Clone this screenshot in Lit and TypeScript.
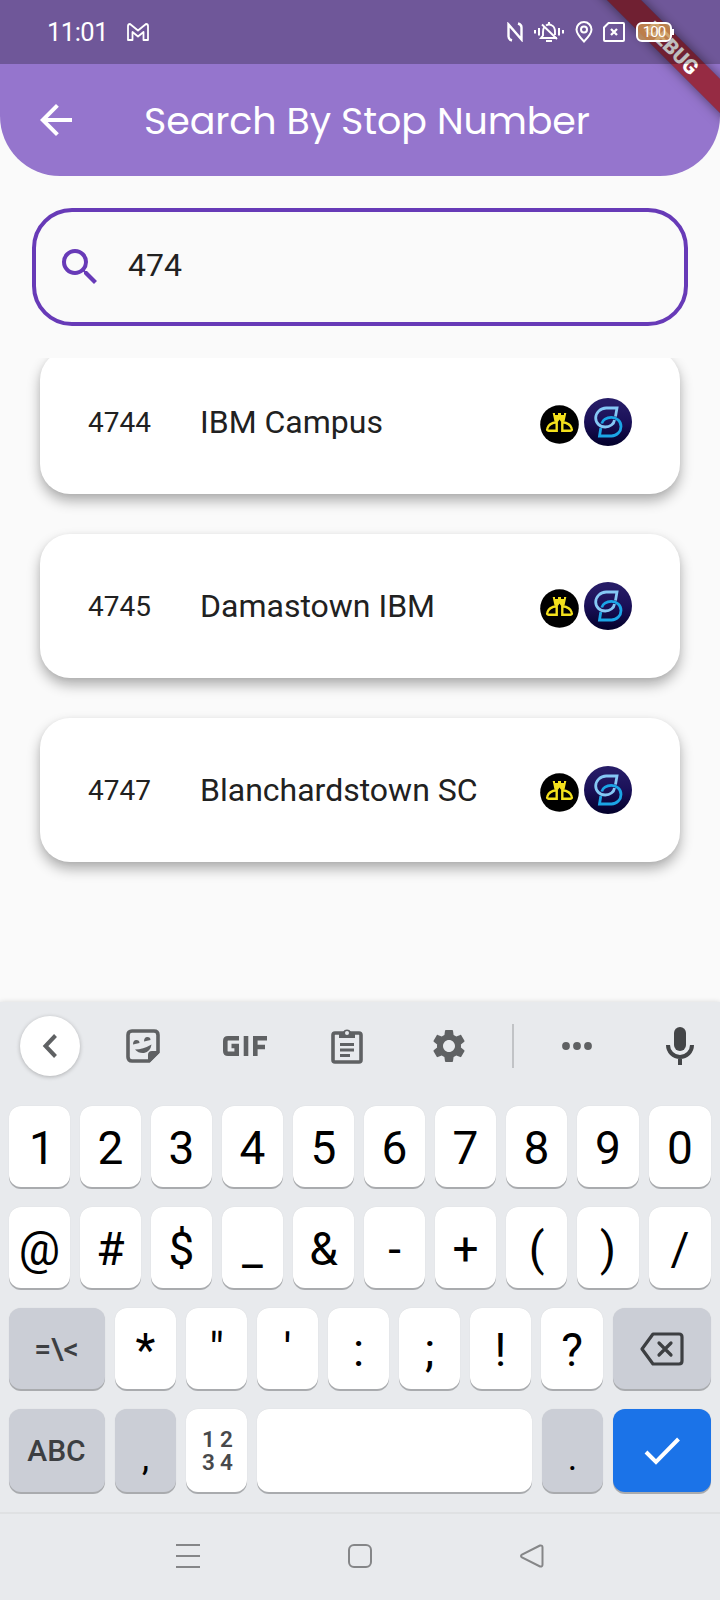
import { LitElement, html, css } from "lit";
import { customElement, property } from "lit/decorators.js";

interface Stop { id: string; name: string }

const STOPS: Stop[] = [
  { id: "4744", name: "IBM Campus" },
  { id: "4745", name: "Damastown IBM" },
  { id: "4747", name: "Blanchardstown SC" },
];

@customElement("status-bar")
class StatusBar extends LitElement {
  static styles = css`
    :host { display: flex; height: 64px; box-sizing: border-box; background: rgba(0, 0, 0, 0.25);
      align-items: center; padding: 0 48px 0 47px; color: #fff; font-family: Roboto, sans-serif; }
    .time { font-size: 25.500px; line-height: 30px; letter-spacing: -0.500px; width: 79px; white-space: nowrap; }
    svg { display: block; flex: none; fill: none; stroke: #fff; stroke-width: 2; }
    .spacer { flex: 1; }
    .nfc { margin-right: 10px; }
    .bell { margin-right: 10px; }
    .pin { margin-right: 10px; }
    .sim { margin-right: 11px; }
    .battery { position: relative; box-sizing: border-box; width: 36px; height: 20px; border: 2px solid #fff; border-radius: 6px;
      background: rgba(214, 158, 84, 0.75); font-size: 15px; line-height: 16px; text-align: center; letter-spacing: -1px; }
    .battery::after { content: ""; position: absolute; right: -4px; top: 5px; width: 2px; height: 6px; background: #fff; }
  `;
  render() {
    return html`
      <span class="time">11:01</span>
      <svg width="24" height="20" viewBox="0 0 24 20" stroke-linejoin="round"><path d="M2 18V4q0-2 2-2l8 6.500 8-6.500q2 0 2 2v14h-4.500v-8L12 14.500 6.500 10v8z" stroke-width="1.800"/></svg>
      <span class="spacer"></span>
      <svg class="nfc" width="16" height="20" viewBox="0 0 16 20"><path d="M5 18.500q-3.500-1-3.500-4V2.500l13 15V5.500q0-3-3.500-4" stroke-width="2.400"/></svg>
      <svg class="bell" width="32" height="22" viewBox="0 0 32 22"><path d="M2 9v3.500M6 7v7.500M30 9v3.500M26 7v7.500M16 1v2M13 20h6"/><path d="M11 6.500q-1 1.500-1 4.500v3.500L8 17h16M13 4.500q3-2 6 0 3 1.500 3 6.500v3M9 3.500 24 18" stroke-width="1.900"/></svg>
      <svg class="pin" width="18" height="22" viewBox="0 0 18 22"><path d="M9 20.500Q1.500 13 1.500 8.500a7.500 7.500 0 0 1 15 0Q16.500 13 9 20.500z"/><circle cx="9" cy="8.500" r="3"/></svg>
      <svg class="sim" width="22" height="20" viewBox="0 0 22 20"><path d="M5.500 1H20q1 0 1 1v16q0 1-1 1H2q-1 0-1-1V5.500z"/><path d="m8 7 6 6m0-6-6 6" stroke-width="2.300"/></svg>
      <span class="battery">100</span>
    `;
  }
}

@customElement("stop-card")
class StopCard extends LitElement {
  @property({ attribute: false }) stop!: Stop;
  static styles = css`
    :host { display: flex; flex: none; height: 144px; box-sizing: border-box; align-items: center; padding: 0 48px;
      background: #fff; border-radius: 30px; color: #212121; font-family: Roboto, sans-serif;
      box-shadow: 0 7px 13px rgba(0, 0, 0, 0.3), 0 1px 5px rgba(0, 0, 0, 0.05); }
    .id { width: 112px; font-size: 28px; line-height: 33px; }
    .name { flex: 1; font-size: 32px; line-height: 38px; white-space: nowrap; }
    svg { display: block; flex: none; }
    .bus { margin: 5px 5px 0 0; }
  `;
  render() {
    return html`
      <span class="id">${this.stop.id}</span>
      <span class="name">${this.stop.name}</span>
      <svg class="bus" width="39" height="39" viewBox="0 0 39 39">
        <circle cx="19.500" cy="19.500" r="19.300" fill="#000"/>
        <g fill="none" stroke="#f4e11c" stroke-width="2.400">
          <path d="M16.700 15.500v10.200H8.600q-2 0-1.300-2.200 1.500-5.500 9.400-6.300"/>
          <path d="M22.300 15.500v10.200h8.100q2 0 1.300-2.200-1.500-5.500-9.400-6.300"/>
        </g>
        <path d="M12.700 8h2.300v2h3V8h3v2h3V8h2.300L24.500 16.500h-3.700l-1.300-2-1.300 2h-3.700z" fill="#f4e11c"/>
      </svg>
      <svg width="48" height="48" viewBox="0 0 48 48">
        <defs><linearGradient id="g" x2="0" y2="1"><stop offset=".1" stop-color="#261c66"/><stop offset=".5" stop-color="#1a1058"/><stop offset="1" stop-color="#02002a"/></linearGradient></defs>
        <circle cx="24" cy="24" r="24" fill="url(#g)"/>
        <g fill="none" stroke-width="2.800">
          <path d="M17.800 25.500C18.500 22 22.500 19.400 27.300 19.400c5.500 0 9.700 4 9.700 9S33 38 27.500 38H15.500l1.300-8" stroke="#1ba5e6"/>
          <path d="M30.500 22c-.5 4-4.500 7-9.300 7-5.500 0-9.500-4-9.500-9s4.500-10 10.500-10H33l-1.500 8.500" stroke="#85c8f5"/>
        </g>
      </svg>
    `;
  }
}

@customElement("key-cap")
class KeyCap extends LitElement {
  @property() tone = "light";
  static styles = css`
    :host { display: block; min-width: 0; font-family: Roboto, sans-serif; }
    .cap { height: 100%; box-sizing: border-box; display: flex; align-items: center; justify-content: center; border-radius: 12px;
      box-shadow: 0 2px 0 #a9abae, 0 0 1px rgba(0, 0, 0, 0.12); background: #fff; color: #000; font-size: 46px; line-height: 54px; padding: 3px 0 0; }
    .first { padding-left: 5px; }
    .dark { background: #cbced6; font-size: 36px; }
    .label { background: #cbced6; color: #3d3f42; font-size: 30px; font-weight: 500; padding: 0 1px 0 0; }
    .go { background: #1b73e8; padding: 0; }
  `;
  render() {
    return html`<div class="cap ${this.tone}"><slot></slot></div>`;
  }
}

@customElement("soft-keyboard")
class SoftKeyboard extends LitElement {
  static styles = css`
    :host { display: flex; flex-direction: column; height: 598px; background: #e8eaed; font-family: Roboto, sans-serif;
      box-shadow: 0 0 5px rgba(0, 0, 0, 0.14); }
    svg { display: block; flex: none; }
    .tools { display: grid; height: 88px; align-items: center; justify-items: center;
      grid-template-columns: 100px 86px 118px 86px 118px 10px 118px 88px; }
    .back { display: flex; align-items: center; justify-content: center; width: 60px; height: 60px; border-radius: 50%;
      background: #fff; box-shadow: 0 1px 4px rgba(0, 0, 0, 0.25); }
    .divider { width: 2px; height: 44px; background: #c1c3c6; }
    .keys { display: grid; grid-template-rows: 81px 81px 81px 83px; gap: 20px; padding: 16px 9px 0; }
    .row { display: grid; gap: 10px; }
    .r10 { grid-template-columns: repeat(8, 61px) 62px 62px; }
    .r3 { grid-template-columns: 96px repeat(6, 61px) 62px 98px; }
    .r4 { grid-template-columns: 96px 61px 61px 275px 61px 98px; }
    .grid { display: grid; grid-template-columns: 18px 18px; margin: -3px 0 0 2px; text-align: center;
      font-size: 22.500px; line-height: 23px; font-weight: 600; color: #48494b; }
    .punct { margin-top: 11px; }
    .small { font-size: 30px; font-weight: 500; }
    .erase { margin-left: 1px; }
    .nav { display: grid; grid-template-columns: 1fr 1fr 1fr; box-sizing: border-box; margin-top: auto; height: 88px; border-top: 2px solid #dfe1e3;
      padding: 0 102px 2px; align-items: center; justify-items: center; }
    .nav svg { fill: none; stroke: #858688; stroke-width: 2; }
  `;
  render() {
    const caps = (s: string) => [...s].map((c) => html`<key-cap tone=${c === "1" ? "first" : "light"}>${c}</key-cap>`);
    return html`
      <div class="tools">
        <div class="back"><svg width="16" height="24" viewBox="0 0 16 24" fill="none" stroke="#5f6163" stroke-width="4"><path d="M13.500 1.500 3.500 12l10 10.500"/></svg></div>
        <svg width="34" height="34" viewBox="0 0 34 34"><path d="M6 2h22q4 0 4 4v17l-9 9H6q-4 0-4-4V6q0-4 4-4z" fill="none" stroke="#5f6163" stroke-width="3.600"/><path d="M33 22v2L24 33h-2v-7q0-4 4-4zM7 15.500q0-4.500 3.300-4.500t3.200 3zM18 12.500q0-4.500 3.300-4.500t3.200 3zM9 20.500q8 0 16.500-5-1 7-7.500 8.500-5.500.5-9-3.500z" fill="#5f6163"/></svg>
        <svg width="44" height="20" viewBox="0 0 44 20" fill="none" stroke="#5f6163" stroke-width="4.600"><path d="M16 2.300H5q-2.700 0-2.700 2.700v10q0 2.700 2.700 2.700h8.700V10H8.500M23 0v20M32.300 20V2.300H44M32 11h10"/></svg>
        <svg width="34" height="38" viewBox="0 0 34 38"><rect x="3" y="6" width="28" height="29" rx="2" fill="none" stroke="#5f6163" stroke-width="3.600"/><path d="M9 5h4a4.500 4.500 0 0 1 8 0h4v6H9z" fill="#5f6163"/><circle cx="17" cy="6" r="2" fill="#e8eaed"/><path d="M10 17.500h14M10 23h14M10 28.500h10" stroke="#5f6163" stroke-width="3"/></svg>
        <svg width="40" height="40" viewBox="0 0 24 24" fill="#5f6163"><path d="M19.140 12.940c.04-.3.060-.61.060-.94 0-.32-.02-.64-.07-.94l2.030-1.580c.18-.14.230-.41.120-.61l-1.920-3.320c-.12-.22-.37-.29-.59-.22l-2.390.96c-.5-.38-1.030-.7-1.620-.94l-.36-2.540c-.04-.24-.24-.41-.48-.41h-3.840c-.24 0-.43.170-.47.410l-.36 2.540c-.59.240-1.130.570-1.620.940l-2.390-.96c-.22-.08-.47 0-.59.220L2.740 8.870c-.12.210-.08.470.120.610l2.030 1.580c-.05.300-.09.630-.09.940s.02.640.07.940l-2.030 1.580c-.18.140-.23.410-.12.610l1.920 3.320c.12.220.37.290.59.220l2.390-.96c.5.380 1.030.7 1.620.940l.36 2.540c.05.240.24.410.48.410h3.840c.24 0 .44-.17.470-.41l.36-2.540c.59-.24 1.130-.56 1.620-.94l2.390.96c.22.080.47 0 .59-.22l1.920-3.320c.12-.22.070-.47-.12-.61l-2.010-1.580zM12 15.600c-1.980 0-3.600-1.620-3.600-3.600s1.620-3.600 3.600-3.600 3.600 1.620 3.600 3.600-1.620 3.600-3.600 3.600z"/></svg>
        <div class="divider"></div>
        <svg width="30" height="8" viewBox="0 0 30 8" fill="#5f6163"><circle cx="4" cy="4" r="3.900"/><circle cx="15" cy="4" r="3.900"/><circle cx="26" cy="4" r="3.900"/></svg>
        <svg width="28" height="38" viewBox="0 0 28 38"><rect x="8" y="0" width="12" height="24" rx="6" fill="#444648"/><path d="M2 18a12 12 0 0 0 24 0M14 30v8" fill="none" stroke="#444648" stroke-width="4"/></svg>
      </div>
      <div class="keys">
        <div class="row r10">${caps("1234567890")}</div>
        <div class="row r10">${caps("@#$_&-+()/")}</div>
        <div class="row r3">
          <key-cap tone="label"><span class="small">=\\&lt;</span></key-cap>${caps("*\"':;!?")}
          <key-cap tone="label"><svg class="erase" width="44" height="34" viewBox="0 0 44 34" fill="none" stroke="#3d3f42" stroke-width="3.200" stroke-linejoin="round"><path d="M13 2h26q3 0 3 3v24q0 3-3 3H13L2 17z"/><path d="m19 11 12 12m0-12-12 12" stroke-linecap="round"/></svg></key-cap>
        </div>
        <div class="row r4">
          <key-cap tone="label">ABC</key-cap>
          <key-cap tone="dark"><span class="punct">,</span></key-cap>
          <key-cap><span class="grid"><span>1</span><span>2</span><span>3</span><span>4</span></span></key-cap>
          <key-cap></key-cap>
          <key-cap tone="dark"><span class="punct">.</span></key-cap>
          <key-cap tone="go"><svg width="36" height="28" viewBox="0 0 36 28" fill="none" stroke="#fff" stroke-width="4"><path d="M2 15 12 25 34.500 2"/></svg></key-cap>
        </div>
      </div>
      <div class="nav">
        <svg width="24" height="24" viewBox="0 0 24 24"><path d="M0 1h24M0 12h24M0 23h24"/></svg>
        <svg width="24" height="24" viewBox="0 0 24 24"><rect x="1" y="1" width="22" height="22" rx="5"/></svg>
        <svg width="24" height="24" viewBox="0 0 24 24"><path d="M20 1.500 2 10.500q-2 1.500 0 3L20 22.500q2.500.5 2.500-2V3.500q0-2.500-2.500-2z"/></svg>
      </div>
    `;
  }
}

@customElement("app-root")
class AppRoot extends LitElement {
  static styles = css`
    :host { display: flex; flex-direction: column; position: relative; height: 1600px; width: 720px; overflow: hidden;
      background: #fafafa; font-family: Roboto, sans-serif; color: #212121; }
    .header { height: 176px; flex: none; background: #9575cd; border-radius: 0 0 60px 60px; }
    status-bar { position: relative; z-index: 2; }
    .bar { display: flex; align-items: center; height: 112px; padding: 0 40px; }
    .title { margin: 2px 0 0 72px; color: #fff; font: 400 38px/48px Poppins, Inter, sans-serif; white-space: nowrap; letter-spacing: -0.100px; }
    .banner { position: absolute; z-index: 1; left: 522px; top: 36px; width: 300px; height: 24px; transform: rotate(45deg);
      background: rgba(150, 20, 24, 0.76); box-shadow: 0 0 12px rgba(0, 0, 0, 0.5); color: #fff; font-size: 20.400px; line-height: 24px;
      font-weight: 900; text-align: center; }
    .search { display: flex; flex: none; align-items: center; box-sizing: border-box; height: 118px; margin: 32px; border: 4px solid #673ab7;
      border-radius: 40px; padding: 0 20px; font-size: 32px; line-height: 38px; }
    .search svg { margin-right: 24px; }
    .query { margin-top: -4px; }
    .list { display: flex; flex-direction: column; justify-content: flex-end; gap: 40px; box-sizing: border-box; overflow: hidden;
      flex: 1; min-height: 0; padding: 0 40px 140px; }
  `;
  render() {
    return html`
      <div class="header">
        <status-bar></status-bar>
        <div class="bar">
          <svg width="32" height="32" viewBox="4 4 16 16" fill="#fff"><path d="M20 11H7.830l5.590-5.590L12 4l-8 8 8 8 1.410-1.410L7.830 13H20v-2z"/></svg>
          <span class="title">Search By Stop Number</span>
        </div>
      </div>
      <div class="banner">DEBUG</div>
      <div class="search">
        <svg width="48" height="48" viewBox="0 0 24 24" fill="#673ab7"><path d="M15.500 14h-.79l-.28-.27A6.471 6.471 0 0 0 16 9.500 6.500 6.500 0 1 0 9.500 16c1.610 0 3.090-.59 4.230-1.570l.27.28v.79l5 4.990L20.490 19l-4.990-5zm-6 0C7.010 14 5 11.990 5 9.500S7.010 5 9.500 5 14 7.010 14 9.500 11.990 14 9.500 14z"/></svg>
        <span class="query">474</span>
      </div>
      <div class="list">${STOPS.map((s) => html`<stop-card .stop=${s}></stop-card>`)}</div>
      <soft-keyboard></soft-keyboard>
    `;
  }
}
